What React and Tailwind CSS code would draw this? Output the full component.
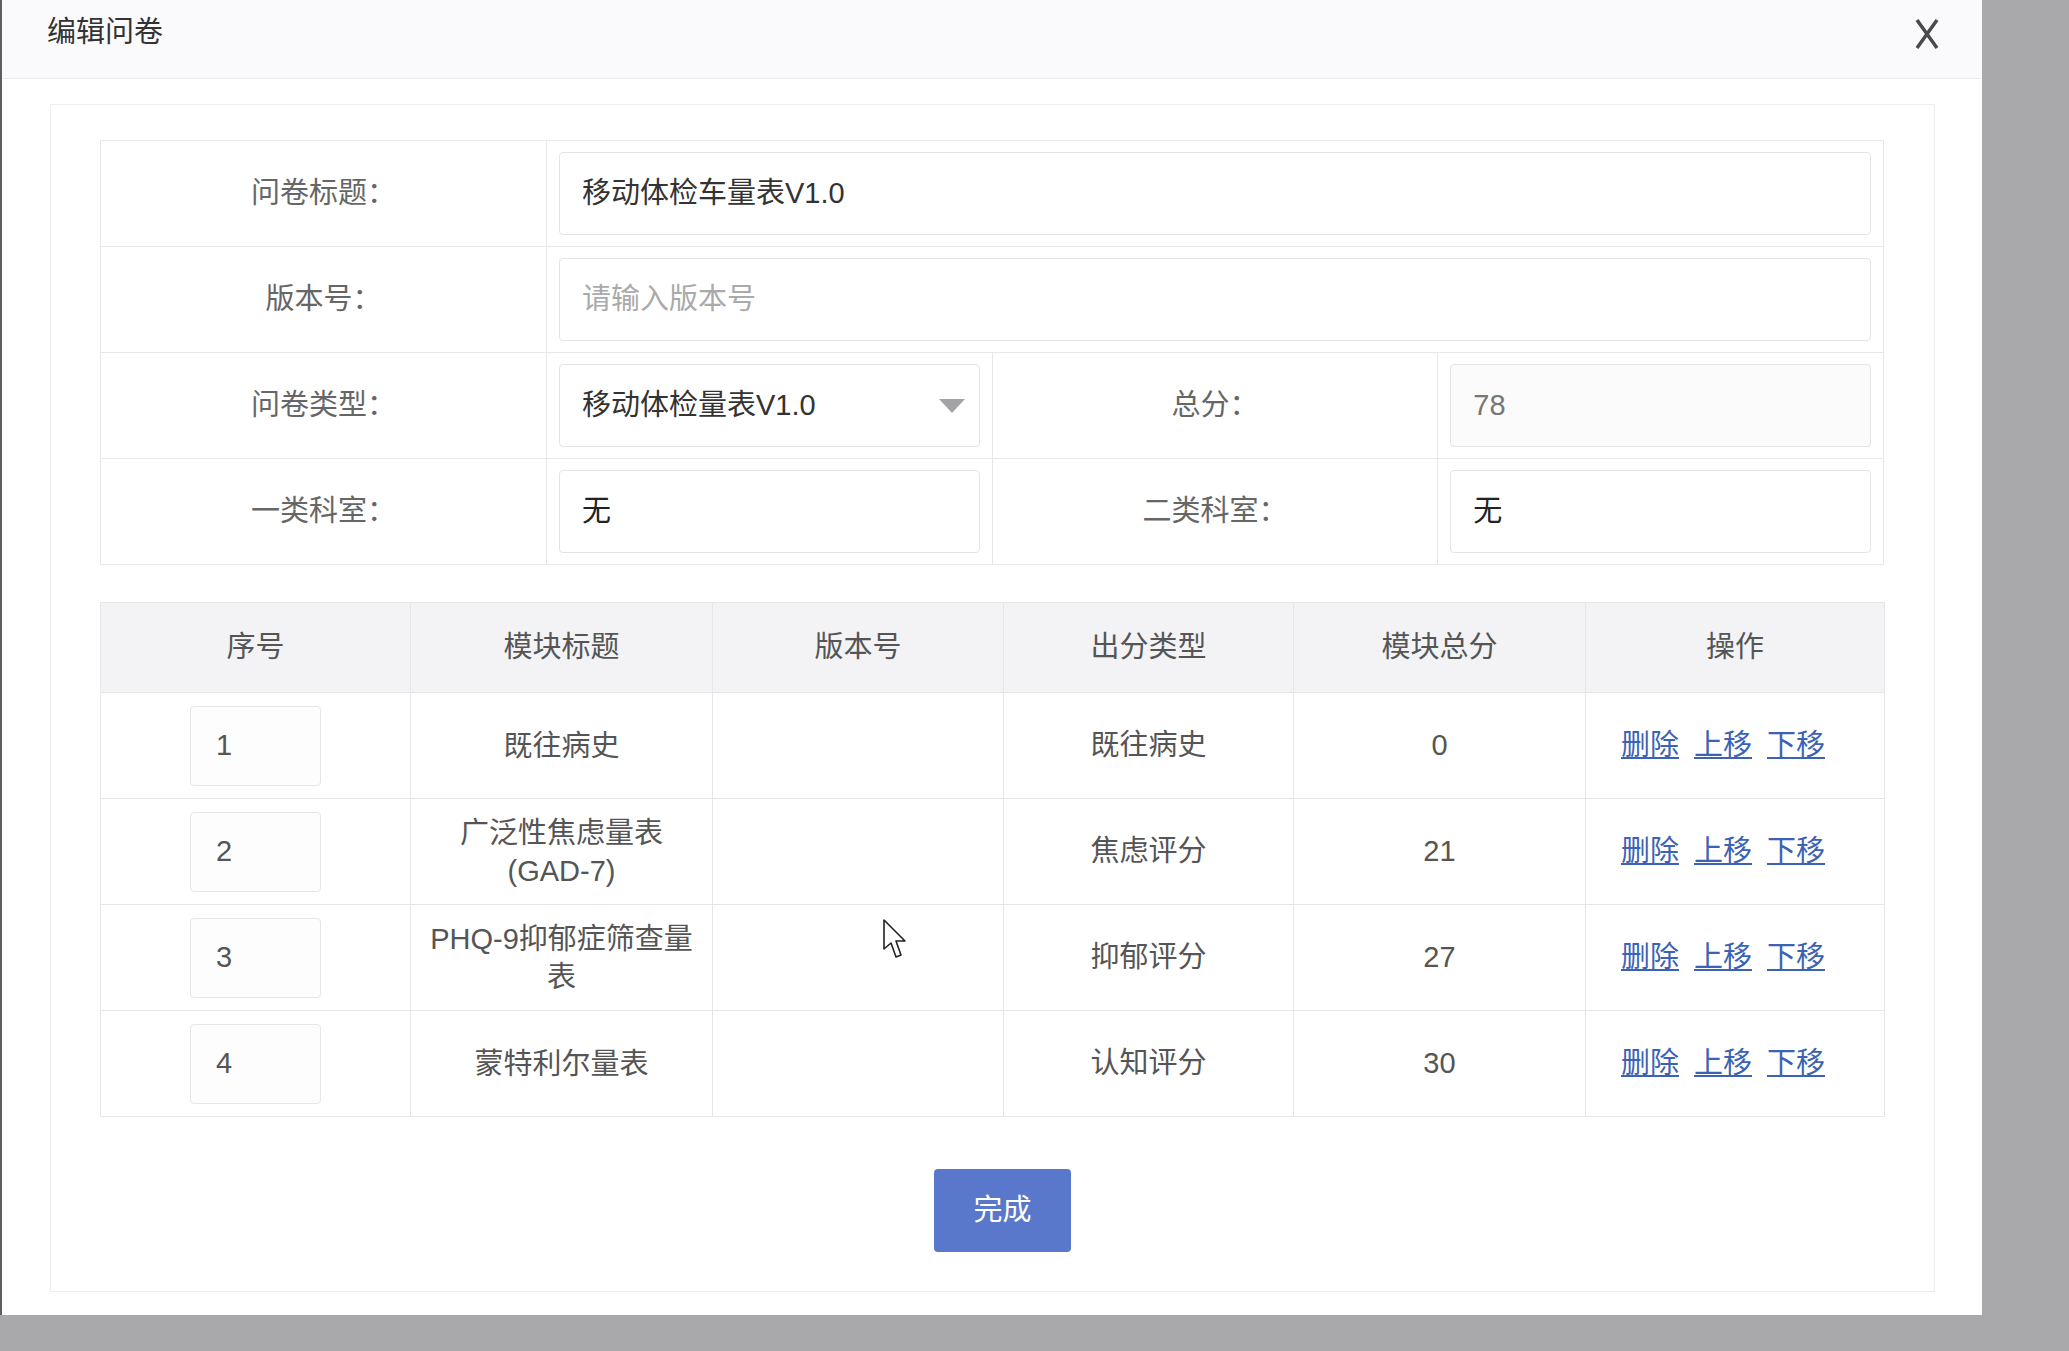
import React from 'react';

const font = { fontFamily: '"Liberation Sans", "Noto Sans CJK SC", sans-serif' };

const modules = [
    { no: '1', title: ['既往病史'], version: '', type: '既往病史', score: '0' },
    { no: '2', title: ['广泛性焦虑量表', '(GAD-7)'], version: '', type: '焦虑评分', score: '21' },
    { no: '3', title: ['PHQ-9抑郁症筛查量', '表'], version: '', type: '抑郁评分', score: '27' },
    { no: '4', title: ['蒙特利尔量表'], version: '', type: '认知评分', score: '30' },
];

// 表单里的单元格
const Label = ({ children }) => (
    <td className="w-[446px] h-[106px] border border-[#e8e8eb] text-center text-[#666] align-middle">{children}</td>
);

const Field = ({ children, disabled }) => (
    <div className={`mx-[12px] h-[83px] flex items-center px-[22px] border border-[#e4e4e8] rounded-[4px] ${disabled ? 'bg-[#fbfbfc]' : 'bg-white'}`}>
        {children}
    </div>
);

const App = () => {
    return (
        <div className="w-[2069px] h-[1351px] bg-[#a9a9ac] overflow-hidden relative" style={font}>
            <div className="w-[1982px] h-[1315px] bg-white border-l-2 border-[#5f5f62] flex flex-col">
                {/* header */}
                <div className="h-[79px] shrink-0 bg-[#fafafc] border-b border-[#ececf0] flex items-center justify-between pl-[45px] pr-[42px]">
                    <span className="text-[29px] text-[#333] -mt-[12px]">编辑问卷</span>
                    <svg width="26" height="34" viewBox="0 0 26 34" className="-mt-[10px]">
                        <path d="M3 3 L23 31 M23 3 L3 31" stroke="#4a4a4d" strokeWidth="3.5" fill="none" />
                    </svg>
                </div>

                {/* body */}
                <div className="pt-[25px] pl-[48px]">
                    <div className="w-[1885px] h-[1188px] border border-[#eeeef1] pt-[35px] px-[49px] flex flex-col">
                        <table className="w-[1784px] border-collapse text-[29px] table-fixed">
                            <tbody>
                                <tr>
                                    <Label>问卷标题：</Label>
                                    <td colSpan={3} className="border border-[#e8e8eb]">
                                        <Field><span className="text-[#333]">移动体检车量表V1.0</span></Field>
                                    </td>
                                </tr>
                                <tr>
                                    <Label>版本号：</Label>
                                    <td colSpan={3} className="border border-[#e8e8eb]">
                                        <Field><span className="text-[#aaa]">请输入版本号</span></Field>
                                    </td>
                                </tr>
                                <tr>
                                    <Label>问卷类型：</Label>
                                    <td className="w-[446px] border border-[#e8e8eb]">
                                        <Field>
                                            <span className="text-[#333] flex-1">移动体检量表V1.0</span>
                                            <svg width="26" height="14" viewBox="0 0 26 14" className="-mr-[8px]">
                                                <path d="M0 0 L26 0 L13 14 Z" fill="#a3a3a6" />
                                            </svg>
                                        </Field>
                                    </td>
                                    <Label>总分：</Label>
                                    <td className="w-[446px] border border-[#e8e8eb]">
                                        <Field disabled><span className="text-[#777]">78</span></Field>
                                    </td>
                                </tr>
                                <tr>
                                    <Label>一类科室：</Label>
                                    <td className="border border-[#e8e8eb]">
                                        <Field><span className="text-[#222]">无</span></Field>
                                    </td>
                                    <Label>二类科室：</Label>
                                    <td className="border border-[#e8e8eb]">
                                        <Field><span className="text-[#222]">无</span></Field>
                                    </td>
                                </tr>
                            </tbody>
                        </table>

                        <table className="w-[1784px] mt-[37px] border-collapse text-[29px] table-fixed text-[#555]">
                            <thead>
                                <tr className="bg-[#f3f3f5] h-[90px]">
                                    <th className="w-[310px] border border-[#e6e6e9] font-normal">序号</th>
                                    <th className="w-[302px] border border-[#e6e6e9] font-normal">模块标题</th>
                                    <th className="w-[291px] border border-[#e6e6e9] font-normal">版本号</th>
                                    <th className="w-[290px] border border-[#e6e6e9] font-normal">出分类型</th>
                                    <th className="w-[292px] border border-[#e6e6e9] font-normal">模块总分</th>
                                    <th className="w-[299px] border border-[#e6e6e9] font-normal">操作</th>
                                </tr>
                            </thead>
                            <tbody>
                                {modules.map((m) => (
                                    <tr key={m.no} className="h-[106px]">
                                        <td className="border border-[#e6e6e9]">
                                            <div className="mx-auto w-[131px] h-[80px] border border-[#e6e6ea] rounded-[4px] bg-[#fdfdfe] flex items-center pl-[25px] text-[#555]">{m.no}</div>
                                        </td>
                                        <td className="border border-[#e6e6e9] text-center leading-[38px] px-[10px]">
                                            {m.title.map((t) => <div key={t}>{t}</div>)}
                                        </td>
                                        <td className="border border-[#e6e6e9] text-center">{m.version}</td>
                                        <td className="border border-[#e6e6e9] text-center">{m.type}</td>
                                        <td className="border border-[#e6e6e9] text-center">{m.score}</td>
                                        <td className="border border-[#e6e6e9]">
                                            <div className="flex justify-center gap-[15px] pr-[24px] text-[#3c62b6]">
                                                <a href="#" className="underline">删除</a>
                                                <a href="#" className="underline">上移</a>
                                                <a href="#" className="underline">下移</a>
                                            </div>
                                        </td>
                                    </tr>
                                ))}
                            </tbody>
                        </table>

                        <div className="mt-[52px] flex justify-center pl-[20px]">
                            <button className="w-[137px] h-[83px] bg-[#5a78cb] rounded-[4px] text-white text-[29px]">完成</button>
                        </div>
                    </div>
                </div>
            </div>

            {/* mouse cursor */}
            <svg width="24" height="40" viewBox="0 0 24 40" className="absolute left-[883px] top-[919px]">
                <path d="M1 1 L1 30 L8 24 L13 38 L18 36 L13 22 L22 22 Z" fill="#fff" stroke="#222" strokeWidth="1.6" strokeLinejoin="round" />
            </svg>
        </div>
    );
};

export default App;
